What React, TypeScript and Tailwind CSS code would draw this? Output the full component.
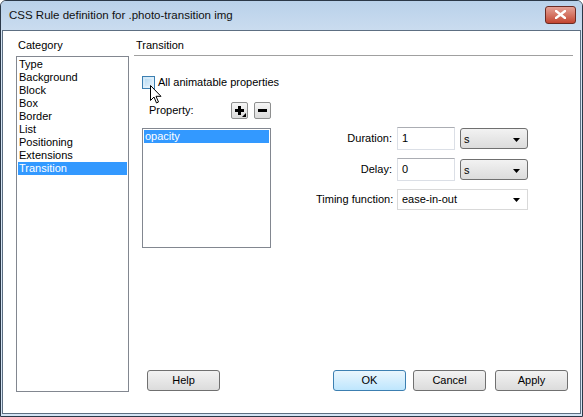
import React from 'react';

const categories = ['Type', 'Background', 'Block', 'Box', 'Border', 'List', 'Positioning', 'Extensions', 'Transition'];

const Arrow = () => (
  <svg width="7" height="4" viewBox="0 0 7 4" className="shrink-0">
    <path d="M0 0 H7 L3.5 4 Z" fill="#000" />
  </svg>
);

const UnitSelect: React.FC<{ value: string }> = ({ value }) => (
  <div className="w-[68px] h-[21px] flex items-center justify-between pl-[3px] pr-[7px] pt-[2px] border border-[#707070] rounded-[3px] bg-gradient-to-b from-[#f2f2f2] to-[#dcdcdc]">
    <span>{value}</span>
    <Arrow />
  </div>
);

const TextField: React.FC<{ value: string }> = ({ value }) => (
  <div className="w-[58px] h-[23px] flex items-center px-[4px] border border-[#dbdfe6] border-t-[#abadb3] bg-white">
    {value}
  </div>
);

const PushButton: React.FC<{ label: string; primary?: boolean }> = ({ label, primary }) => (
  <div
    className={
      primary
        ? 'w-[73px] h-[21px] flex items-center justify-center rounded-[3px] border border-[#3c7fb1] bg-gradient-to-b from-[#eaf6fd] to-[#bee6fd]'
        : 'w-[73px] h-[21px] flex items-center justify-center rounded-[3px] border border-[#707070] bg-gradient-to-b from-[#f2f2f2] to-[#dcdcdc]'
    }
  >
    {label}
  </div>
);

const IconButton: React.FC<{ plus?: boolean }> = ({ plus }) => (
  <div className="relative w-[17px] h-[17px] flex items-center justify-center rounded-[2px] border border-[#8e8f8f] bg-gradient-to-b from-[#f6f6f6] to-[#dadada]">
    <svg width="11" height="11" viewBox="0 0 11 11">
      {plus && <rect x="4" y="1" width="3" height="9" fill="#000" />}
      <rect x="1" y="4" width="9" height="3" fill="#000" />
    </svg>
    {plus && (
      <svg width="4" height="4" viewBox="0 0 4 4" className="absolute right-[1px] bottom-[1px]">
        <path d="M4 0 V4 H0 Z" fill="#000" />
      </svg>
    )}
  </div>
);

export default function App() {
  return (
    <div className="w-[583px] h-[417px] font-['Liberation_Sans',sans-serif] text-[11px] text-black bg-[#d4e4f4] border border-[#2b3848] rounded-t-[6px] flex flex-col overflow-hidden">
      {/* title bar */}
      <div className="h-[29px] shrink-0 flex items-center justify-between pl-[8px] pr-[6px] bg-gradient-to-b from-[#b9d1ea] to-[#cadcef]">
        <span className="text-[11.5px] text-[#111]">CSS Rule definition for .photo-transition img</span>
        <div className="w-[31px] h-[18px] mb-[2px] flex items-center justify-center rounded-[3px] border border-[#6b2a22] bg-gradient-to-b from-[#e4a196] to-[#c2432f]">
          <svg width="11" height="9" viewBox="0 0 11 9">
            <path d="M1 1 L10 8 M10 1 L1 8" stroke="#fff" strokeWidth="2.4" strokeLinecap="square" />
          </svg>
        </div>
      </div>

      {/* client area */}
      <div className="flex-1 mx-[1px] mb-[2px] border border-[#5d6f82] bg-white flex">
        {/* category column */}
        <div className="ml-[13px] w-[113px] flex flex-col">
          <div className="h-[25px] flex items-end pl-[2px] pb-[3px]">Category</div>
          <div className="h-[336px] border border-[#828790] px-[1px] pt-[1px] flex flex-col">
            {categories.map((c) => (
              <div
                key={c}
                className={c === 'Transition' ? 'h-[13px] leading-[13px] pl-[1px] bg-[#3399ff] text-white' : 'h-[13px] leading-[13px] pl-[1px]'}
              >
                {c}
              </div>
            ))}
          </div>
        </div>

        {/* panel */}
        <div className="ml-[5px] w-[439px] flex flex-col relative">
          <div className="h-[25px] flex items-end pl-[2px] pb-[2px] border-b border-[#a0a0a0]">Transition</div>

          <div className="flex">
            {/* left side */}
            <div className="ml-[8px] w-[130px] flex flex-col">
              <div className="mt-[18px] flex items-center gap-[3px] whitespace-nowrap">
                <div className="w-[13px] h-[13px] shrink-0 border border-[#3c7fb1] bg-gradient-to-br from-[#cfe7f8] to-[#eaf5fc] p-[2px]">
                  <div className="w-full h-full bg-gradient-to-br from-[#b9dcf3] to-[#e3f1fb]" />
                </div>
                <span>All animatable properties</span>
              </div>
              <div className="mt-[11px] flex items-center">
                <span className="ml-[7px] w-[82px]">Property:</span>
                <IconButton plus />
                <div className="w-[6px]" />
                <IconButton />
              </div>
              <div className="mt-[9px] w-[129px] h-[120px] border border-[#828790] px-[1px] pt-[1px]">
                <div className="h-[13px] leading-[13px] pl-[1px] bg-[#3399ff] text-white">opacity</div>
              </div>
            </div>

            {/* right side */}
            <div className="ml-[44px] flex flex-col">
              <div className="mt-[71px] flex items-center">
                <span className="w-[81px] text-right pr-[5px]">Duration:</span>
                <TextField value="1" />
                <div className="w-[5px]" />
                <UnitSelect value="s" />
              </div>
              <div className="mt-[8px] flex items-center">
                <span className="w-[81px] text-right pr-[5px]">Delay:</span>
                <TextField value="0" />
                <div className="w-[5px]" />
                <UnitSelect value="s" />
              </div>
              <div className="mt-[8px] flex items-center">
                <span className="w-[81px] text-right pr-[5px] whitespace-nowrap">Timing function:</span>
                <div className="w-[131px] h-[21px] flex items-center justify-between pl-[4px] pr-[7px] border border-[#d9d9d9] bg-white">
                  <span>ease-in-out</span>
                  <Arrow />
                </div>
              </div>
            </div>
          </div>

          <div className="flex-1" />
          <div className="flex items-center mb-[22px]">
            <div className="ml-[13px]">
              <PushButton label="Help" />
            </div>
            <div className="flex-1" />
            <PushButton label="OK" primary />
            <div className="w-[7px]" />
            <PushButton label="Cancel" />
            <div className="w-[9px]" />
            <PushButton label="Apply" />
            <div className="w-[5px]" />
          </div>

          {/* mouse pointer over the checkbox */}
          <svg width="12" height="19" viewBox="0 0 12 19" className="absolute left-[16px] top-[54px]">
            <path d="M0.5 0.5 V15.5 L4 12 L6.5 18 L8.5 17 L6 11.3 L11 11.3 Z" fill="#fff" stroke="#000" strokeWidth="1" strokeLinejoin="round" />
          </svg>
        </div>
      </div>
    </div>
  );
}
